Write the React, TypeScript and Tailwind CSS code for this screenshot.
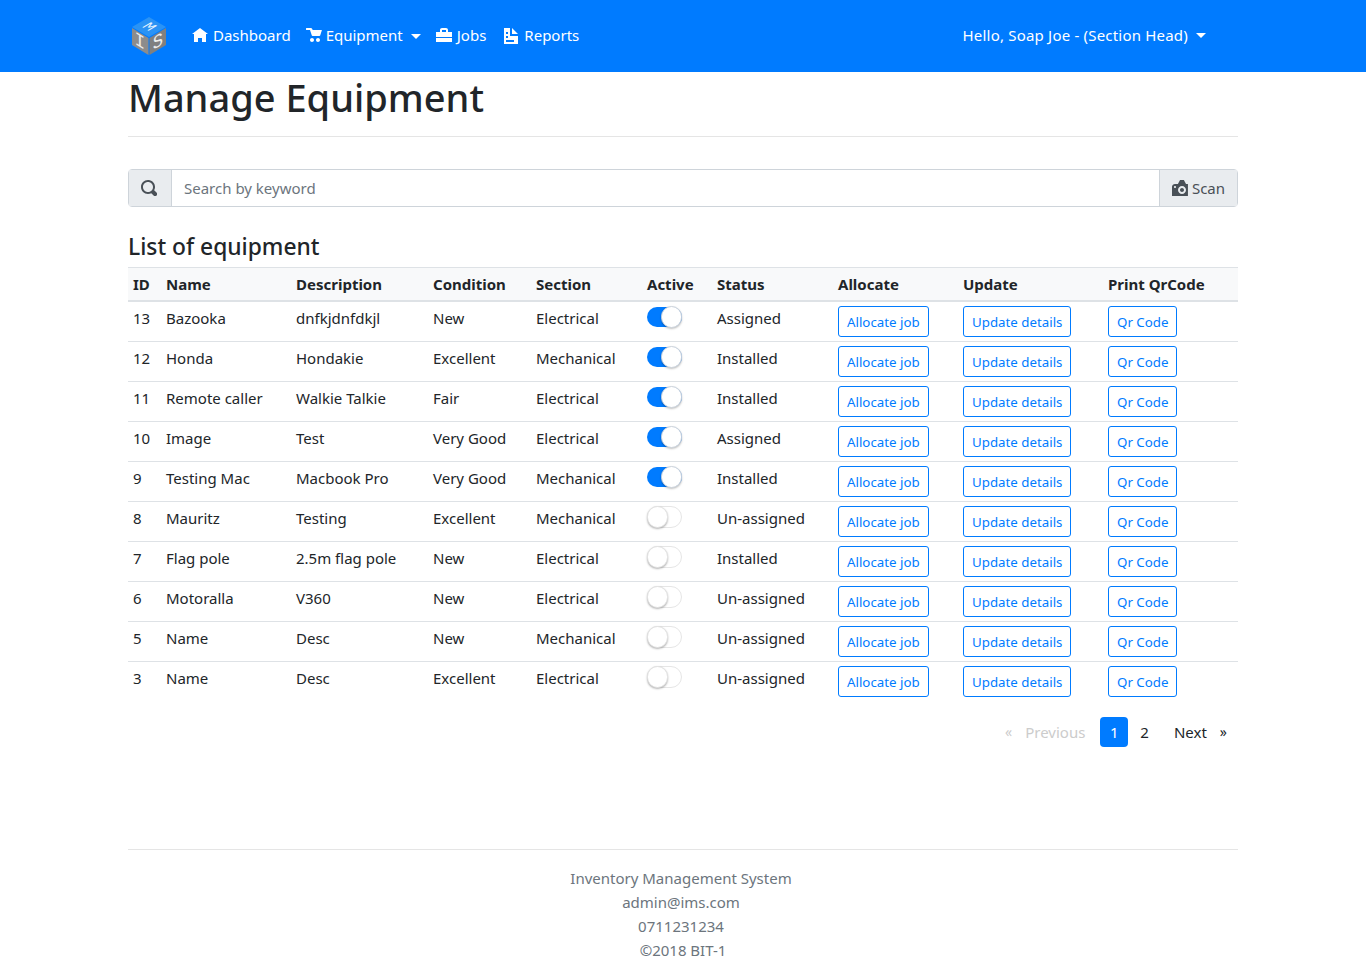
const rows = [
  { id: 13, name: 'Bazooka', desc: 'dnfkjdnfdkjl', cond: 'New', section: 'Electrical', active: true, status: 'Assigned' },
  { id: 12, name: 'Honda', desc: 'Hondakie', cond: 'Excellent', section: 'Mechanical', active: true, status: 'Installed' },
  { id: 11, name: 'Remote caller', desc: 'Walkie Talkie', cond: 'Fair', section: 'Electrical', active: true, status: 'Installed' },
  { id: 10, name: 'Image', desc: 'Test', cond: 'Very Good', section: 'Electrical', active: true, status: 'Assigned' },
  { id: 9, name: 'Testing Mac', desc: 'Macbook Pro', cond: 'Very Good', section: 'Mechanical', active: true, status: 'Installed' },
  { id: 8, name: 'Mauritz', desc: 'Testing', cond: 'Excellent', section: 'Mechanical', active: false, status: 'Un-assigned' },
  { id: 7, name: 'Flag pole', desc: '2.5m flag pole', cond: 'New', section: 'Electrical', active: false, status: 'Installed' },
  { id: 6, name: 'Motoralla', desc: 'V360', cond: 'New', section: 'Electrical', active: false, status: 'Un-assigned' },
  { id: 5, name: 'Name', desc: 'Desc', cond: 'New', section: 'Mechanical', active: false, status: 'Un-assigned' },
  { id: 3, name: 'Name', desc: 'Desc', cond: 'Excellent', section: 'Electrical', active: false, status: 'Un-assigned' },
]

const columns = [
  { label: 'ID', width: 'w-[33px]' },
  { label: 'Name', width: 'w-[130px]' },
  { label: 'Description', width: 'w-[137px]' },
  { label: 'Condition', width: 'w-[103px]' },
  { label: 'Section', width: 'w-[111px]' },
  { label: 'Active', width: 'w-[70px]' },
  { label: 'Status', width: 'w-[121px]' },
  { label: 'Allocate', width: 'w-[125px]' },
  { label: 'Update', width: 'w-[145px]' },
  { label: 'Print QrCode', width: 'w-[135px]' },
]

function Icon({ d, className }: { d: string; className: string }) {
  return (
    <svg viewBox="0 0 8 8" className={className} fill="currentColor">
      <path d={d} />
    </svg>
  )
}

const icons = {
  home: 'M4 0l-4 3h1v4h2v-2h2v2h2v-4.03l1 .03-4-3z',
  cart: 'M.34 0a.5.5 0 0 0 .16 1h1.5l.09.25.41 1.25.41 1.25c.04.13.21.25.34.25h3.5c.14 0 .3-.12.34-.25l.81-2.5c.04-.13-.02-.25-.16-.25h-4.38l-.41-.72a.5.5 0 0 0-.44-.28h-2a.5.5 0 0 0-.09 0 .5.5 0 0 0-.06 0zm2.66 5c-.55 0-1 .45-1 1s.45 1 1 1 1-.45 1-1-.45-1-1-1zm3 0c-.55 0-1 .45-1 1s.45 1 1 1 1-.45 1-1-.45-1-1-1z',
  briefcase: 'M3 0c-.55 0-1 .45-1 1v1h-2v2.5h8v-2.5h-2v-1c0-.55-.45-1-1-1h-2zm0 1h2v1h-2v-1zm-3 4v2h8v-2z',
  document: 'M0 0v8h7v-4h-4v-4h-3zm4 0v3h3l-3-3zm-3 2h1v1h-1v-1zm0 2h1v1h-1v-1zm0 2h4v1h-4v-1z',
  search: 'M3.5 0c-1.93 0-3.5 1.57-3.5 3.5s1.57 3.5 3.5 3.5c.59 0 1.17-.14 1.66-.41a1 1 0 0 0 .13.13l1 1a1.02 1.02 0 1 0 1.44-1.44l-1-1a1 1 0 0 0-.16-.13c.27-.49.44-1.06.44-1.66 0-1.93-1.57-3.5-3.5-3.5zm0 1c1.39 0 2.5 1.11 2.5 2.5 0 .66-.24 1.27-.66 1.72-.01.01-.02.02-.03.03a1 1 0 0 0-.13.13c-.44.4-1.04.63-1.69.63-1.39 0-2.5-1.11-2.5-2.5s1.11-2.5 2.5-2.5z',
  camera: 'M4.09 0c-.05 0-.1.04-.13.09l-.94 1.81c-.02.05-.07.09-.13.09h-1.41c-.83 0-1.5.67-1.5 1.5v4.41c0 .05.04.09.09.09h7.81c.05 0 .09-.04.09-.09v-5.81c0-.05-.04-.09-.09-.09h-.81c-.05 0-.11-.04-.13-.09l-.94-1.81c-.03-.05-.07-.09-.13-.09h-1.81zm-2.59 3c.28 0 .5.22.5.5s-.22.5-.5.5-.5-.22-.5-.5.22-.5.5-.5zm3.5 0c1.1 0 2 .9 2 2s-.9 2-2 2-2-.9-2-2 .9-2 2-2zm0 1c-.55 0-1 .45-1 1s.45 1 1 1 1-.45 1-1-.45-1-1-1z',
}

function Logo() {
  return (
    <svg viewBox="0 0 38 40" className="h-[40px] w-[38px]">
      <path d="M20 1 L37 11 L20 21 L3 11 Z" fill="#2a93f5" />
      <path d="M3 12 L19.5 22 L19.5 39 L3 29 Z" fill="#8c8c8c" />
      <path d="M37 12 L20.5 22 L20.5 39 L37 29 Z" fill="#808080" />
      <text
        fontSize="18"
        textAnchor="middle"
        fill="#e8f3ff"
        transform="matrix(.72 .42 -.72 .42 20 11) translate(0 5)"
        fontFamily="'Liberation Mono', monospace"
      >
        M
      </text>
      <text
        fontSize="19"
        textAnchor="middle"
        fill="#eeeeee"
        transform="matrix(.9 .55 0 1 11 25) translate(0 6)"
        fontFamily="'Liberation Mono', monospace"
      >
        I
      </text>
      <text
        fontSize="19"
        textAnchor="middle"
        fill="#eeeeee"
        transform="matrix(.9 -.55 0 1 29 25) translate(0 6)"
        fontFamily="'Liberation Mono', monospace"
      >
        S
      </text>
    </svg>
  )
}

function Caret() {
  return <span className="ml-2 inline-block border-x-[5px] border-t-[5px] border-x-transparent border-t-white align-[3px]" />
}

function NavItem({
  icon,
  label,
  caret,
  className,
  iconClass,
}: {
  icon: string
  label: string
  caret?: boolean
  className: string
  iconClass: string
}) {
  return (
    <a className={`flex items-center px-2 text-white ${className}`}>
      <Icon d={icon} className={`h-4 w-4 ${iconClass}`} />
      <span className="-mt-px">{label}</span>
      {caret && <Caret />}
    </a>
  )
}

function Toggle({ on }: { on: boolean }) {
  return on ? (
    <div className="relative h-[22px] w-[35px]">
      <div className="absolute inset-x-0 top-px h-5 rounded-full bg-[#007bff]" />
      <div className="absolute right-0 top-0 h-[22px] w-[21px] rounded-full border border-[#ccd3dc] bg-white shadow-[0_1px_2px_rgba(0,0,0,0.25)]" />
    </div>
  ) : (
    <div className="relative h-[22px] w-[35px] rounded-full border border-[#e6e6e6] bg-white">
      <div className="absolute -left-px -top-px h-[22px] w-[21px] rounded-full border border-[#e2e2e2] bg-white shadow-[0_1px_2px_rgba(0,0,0,0.3)]" />
    </div>
  )
}

function OutlineBtn({ label }: { label: string }) {
  return (
    <button className="mt-1 h-[31px] rounded-[3px] border border-[#007bff] px-2 pt-[2px] text-[13.3px] leading-[21px] text-[#007bff]">
      {label}
    </button>
  )
}

export default function App() {
  return (
    <div className="min-h-[962px] bg-white font-['Noto_Sans','Open_Sans',sans-serif] text-[15px] text-[#212529]">
      <nav className="h-[72px] bg-[#007bff]">
        <div className="mx-auto flex h-full w-[1140px] items-center pl-[16px] pr-[15px]">
          <Logo />
          <div className="ml-[17px] flex items-center">
            <NavItem icon={icons.home} label="Dashboard" className="" iconClass="mr-[5px]" />
            <NavItem icon={icons.cart} label="Equipment" caret className="-ml-px" iconClass="mr-1" />
            <NavItem icon={icons.briefcase} label="Jobs" className="-ml-px" iconClass="mr-[5px]" />
            <NavItem icon={icons.document} label="Reports" className="ml-[2px]" iconClass="mr-1" />
          </div>
          <a className="ml-auto mr-[32px] -mt-[2px] tracking-[0.2px] text-white">
            Hello, Soap Joe - (Section Head)
            <Caret />
          </a>
        </div>
      </nav>

      <main className="mx-auto w-[1110px]">
        <h1 className="-mt-px text-[38px] font-medium leading-[52px]">Manage Equipment</h1>
        <hr className="mt-[13px] border-[#e5e5e5]" />

        <div className="mt-8 flex h-[38px] rounded border border-[#ced4da]">
          <div className="flex w-[43px] items-center justify-center border-r border-[#ced4da] bg-[#e9ecef] pr-[2px] text-[#495057]">
            <Icon d={icons.search} className="h-4 w-4" />
          </div>
          <input
            className="min-w-0 flex-1 px-3 text-[#6c757d] outline-none placeholder:text-[#6c757d]"
            placeholder="Search by keyword"
          />
          <div className="flex w-[78px] items-center justify-center border-l border-[#ced4da] bg-[#e9ecef] text-[#495057]">
            <Icon d={icons.camera} className="mr-1 h-4 w-4" />
            Scan
          </div>
        </div>

        <h4 className="mt-[22px] text-[22.8px] font-medium leading-[36px]">List of equipment</h4>

        <table className="mt-[2px] w-full table-fixed border-separate border-spacing-0">
          <colgroup>
            {columns.map((c) => (
              <col key={c.label} className={c.width} />
            ))}
          </colgroup>
          <thead>
            <tr className="h-[35px] bg-[#f8f9fa]">
              {columns.map((c) => (
                <th key={c.label} className="border-t border-b-2 border-[#dee2e6] px-[5px] text-left font-bold">
                  {c.label}
                </th>
              ))}
            </tr>
          </thead>
          <tbody>
            {rows.map((r, i) => {
              const cell = `h-10 px-[5px] align-top ${i < rows.length - 1 ? 'border-b border-[#dee2e6]' : ''}`
              const text = `${cell} pt-1 leading-6`
              return (
                <tr key={r.id}>
                  <td className={text}>{r.id}</td>
                  <td className={text}>{r.name}</td>
                  <td className={text}>{r.desc}</td>
                  <td className={text}>{r.cond}</td>
                  <td className={text}>{r.section}</td>
                  <td className={text}>
                    <Toggle on={r.active} />
                  </td>
                  <td className={text}>{r.status}</td>
                  <td className={cell}>
                    <OutlineBtn label="Allocate job" />
                  </td>
                  <td className={cell}>
                    <OutlineBtn label="Update details" />
                  </td>
                  <td className={cell}>
                    <OutlineBtn label="Qr Code" />
                  </td>
                </tr>
              )
            })}
          </tbody>
        </table>

        <div className="mt-[15px] flex items-center justify-end pr-[11px]">
          <span className="text-sm text-[#cccccc]">«</span>
          <span className="ml-[13px] text-[#cccccc]">Previous</span>
          <span className="ml-[15px] flex h-[30px] w-7 items-center justify-center rounded bg-[#007bff] text-white">1</span>
          <span className="mx-[12px]">2</span>
          <span className="ml-[13px]">Next</span>
          <span className="ml-[13px] text-sm">»</span>
        </div>

        <hr className="mt-[102px] border-[#e5e5e5]" />
        <footer className="pt-4 text-center text-[#6c757d]">
          <div className="h-6 pr-1 leading-6">Inventory Management System</div>
          <div className="h-6 pr-1 leading-6">admin@ims.com</div>
          <div className="h-6 pr-1 leading-6">0711231234</div>
          <div className="h-6 leading-6">©2018 BIT-1</div>
        </footer>
      </main>
    </div>
  )
}
